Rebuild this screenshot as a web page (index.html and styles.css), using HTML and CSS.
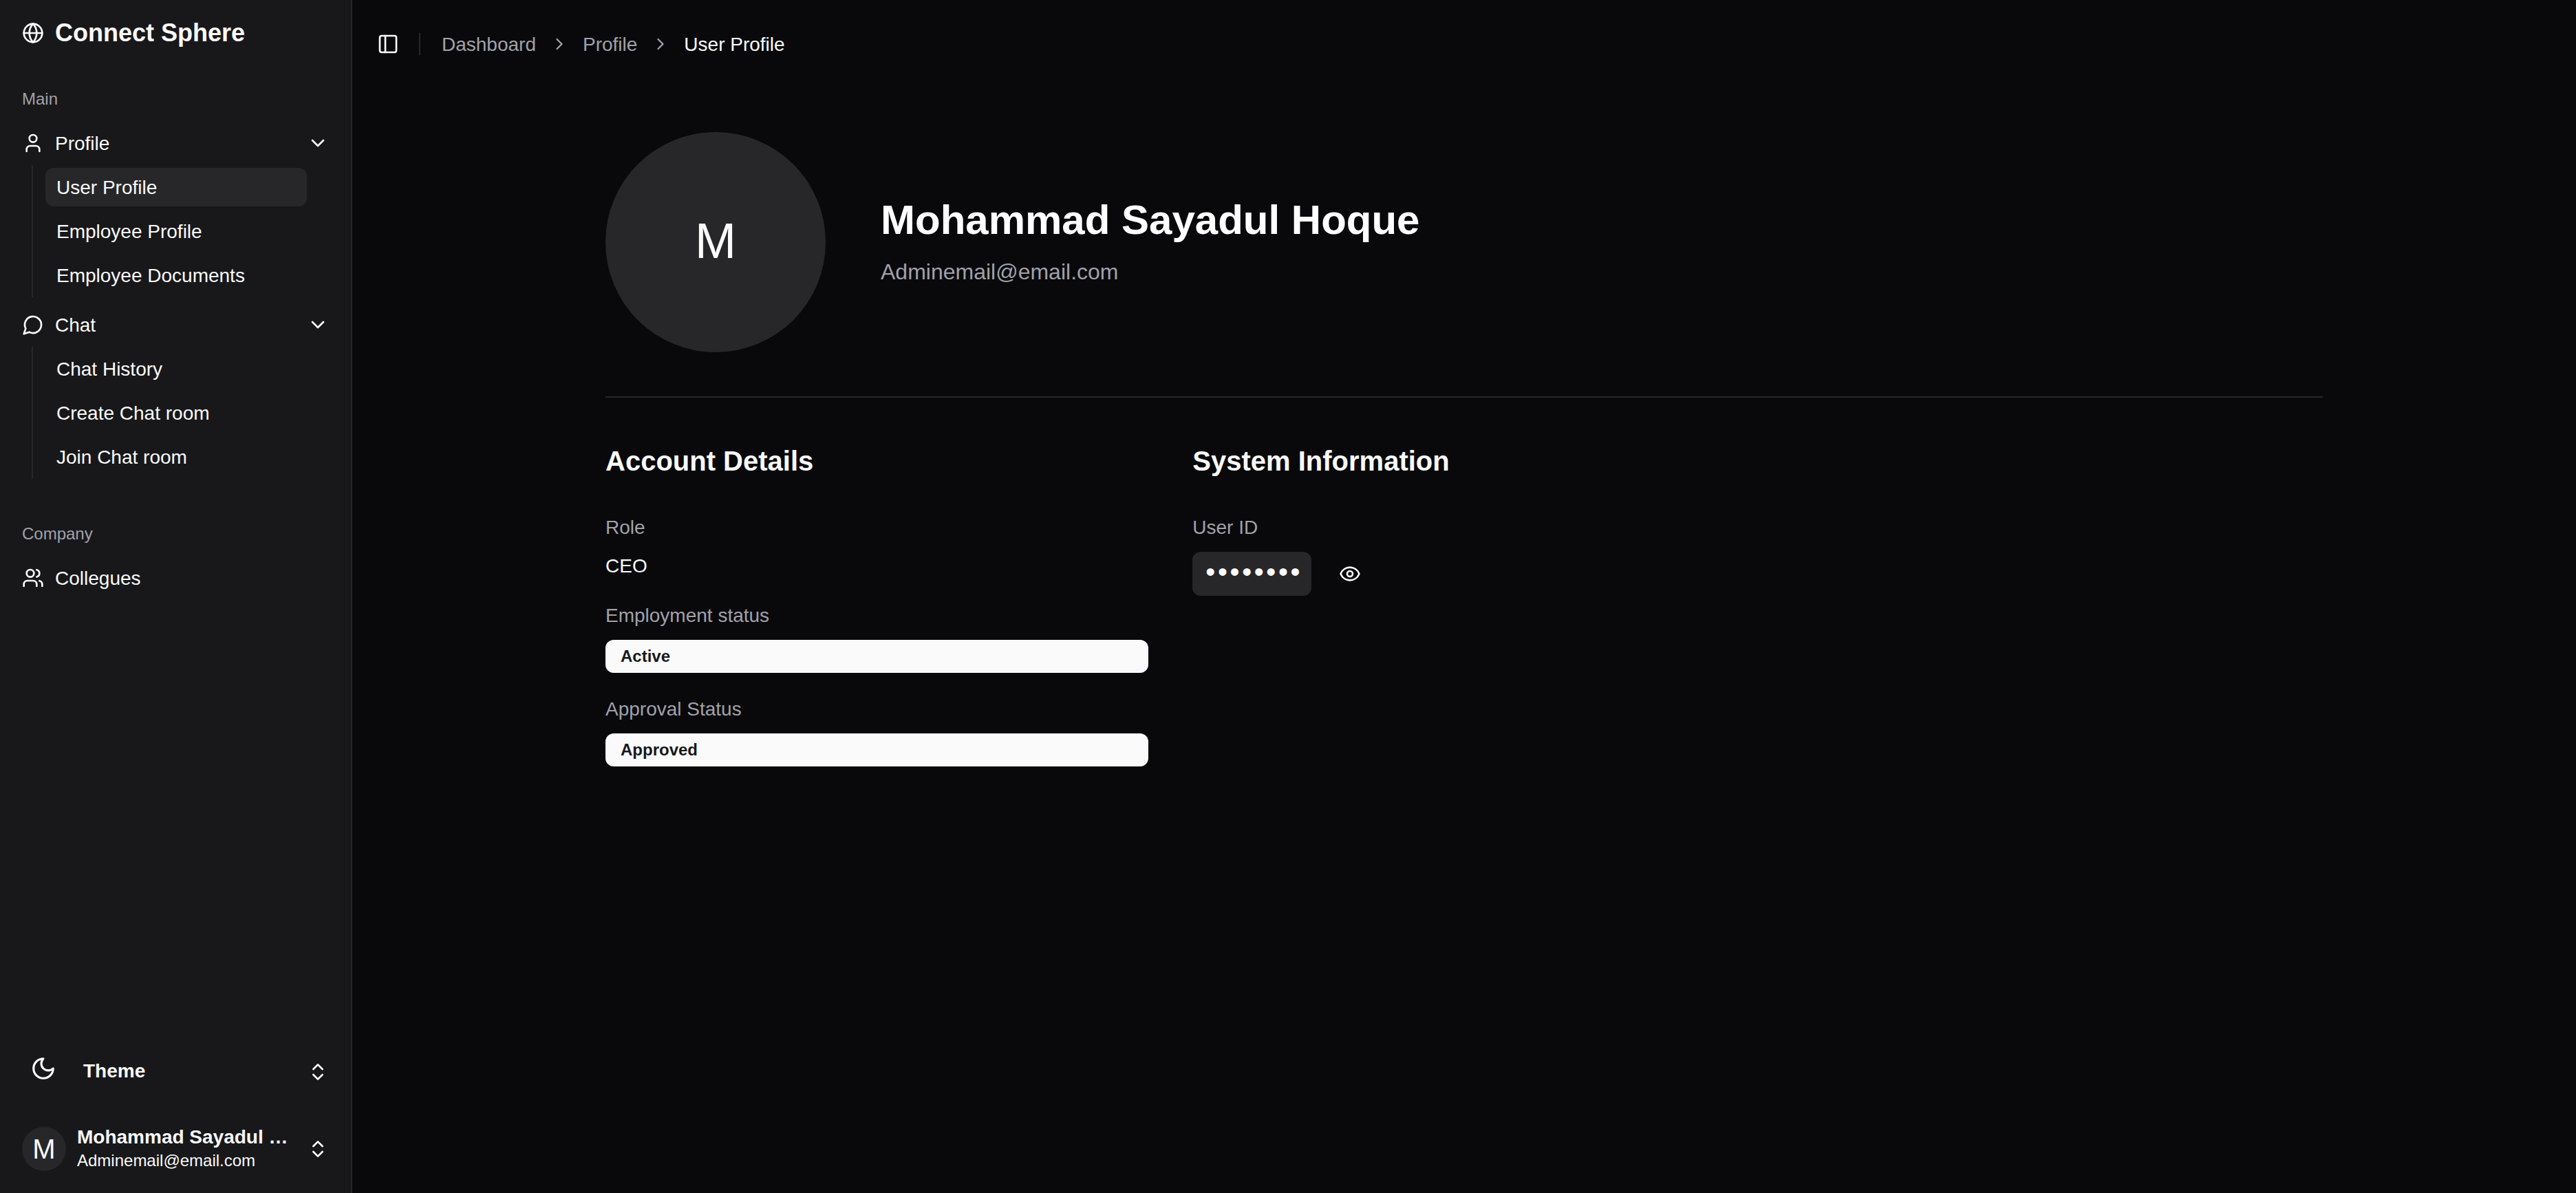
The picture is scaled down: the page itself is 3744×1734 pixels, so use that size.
FILE: index.html
```html
<!DOCTYPE html>
<html lang="en">
<head>
  <meta charset="UTF-8">
  <title>Connect Sphere</title>
  <link rel="stylesheet" href="styles.css">
</head>
<body>
  <aside class="sidebar">
    <div class="brand">
      <svg class="icon" viewBox="0 0 24 24"><circle cx="12" cy="12" r="10"/><path d="M12 2a14.5 14.5 0 0 0 0 20 14.5 14.5 0 0 0 0-20"/><path d="M2 12h20"/></svg>
      <span>Connect Sphere</span>
    </div>

    <div class="group">
      <div class="group-label">Main</div>
      <div class="nav-row">
        <svg class="icon" viewBox="0 0 24 24"><path d="M19 21v-2a4 4 0 0 0-4-4H9a4 4 0 0 0-4 4v2"/><circle cx="12" cy="7" r="4"/></svg>
        <span>Profile</span>
        <svg class="icon row-end" viewBox="0 0 24 24"><path d="m6 9 6 6 6-6"/></svg>
      </div>
      <ul class="sub-nav">
        <li class="active">User Profile</li>
        <li>Employee Profile</li>
        <li>Employee Documents</li>
      </ul>
      <div class="nav-row spaced">
        <svg class="icon" viewBox="0 0 24 24"><path d="M7.9 20A9 9 0 1 0 4 16.1L2 22Z"/></svg>
        <span>Chat</span>
        <svg class="icon row-end" viewBox="0 0 24 24"><path d="m6 9 6 6 6-6"/></svg>
      </div>
      <ul class="sub-nav">
        <li>Chat History</li>
        <li>Create Chat room</li>
        <li>Join Chat room</li>
      </ul>
    </div>

    <div class="group company">
      <div class="group-label">Company</div>
      <div class="nav-row">
        <svg class="icon" viewBox="0 0 24 24"><path d="M16 21v-2a4 4 0 0 0-4-4H6a4 4 0 0 0-4 4v2"/><circle cx="9" cy="7" r="4"/><path d="M22 21v-2a4 4 0 0 0-3-3.87"/><path d="M16 3.13a4 4 0 0 1 0 7.75"/></svg>
        <span>Collegues</span>
      </div>
    </div>

    <div class="sidebar-foot">
      <div class="theme-row">
        <svg class="icon moon" viewBox="0 0 24 24"><path d="M12 3a6 6 0 0 0 9 9 9 9 0 1 1-9-9Z"/></svg>
        <span class="theme-label">Theme</span>
        <svg class="icon row-end theme-updown" viewBox="0 0 24 24"><path d="m7 15 5 5 5-5"/><path d="m7 9 5-5 5 5"/></svg>
      </div>
      <div class="user-row">
        <div class="user-avatar">M</div>
        <div class="user-text">
          <div class="user-name">Mohammad Sayadul Hoque</div>
          <div class="user-mail">Adminemail@email.com</div>
        </div>
        <svg class="icon row-end" viewBox="0 0 24 24"><path d="m7 15 5 5 5-5"/><path d="m7 9 5-5 5 5"/></svg>
      </div>
    </div>
  </aside>

  <main class="main">
    <header class="topbar">
      <svg class="icon" viewBox="0 0 24 24"><rect x="3" y="3" width="18" height="18" rx="2"/><path d="M9 3v18"/></svg>
      <div class="topbar-sep"></div>
      <nav class="crumbs">
        <span>Dashboard</span>
        <svg class="crumb-icon" viewBox="0 0 24 24"><path d="m9 18 6-6-6-6"/></svg>
        <span>Profile</span>
        <svg class="crumb-icon" viewBox="0 0 24 24"><path d="m9 18 6-6-6-6"/></svg>
        <span class="crumb-current">User Profile</span>
      </nav>
    </header>

    <div class="content">
      <section class="profile-head">
        <div class="profile-avatar">M</div>
        <div class="profile-text">
          <h1 class="profile-name">Mohammad Sayadul Hoque</h1>
          <p class="profile-mail">Adminemail@email.com</p>
        </div>
      </section>

      <div class="details">
        <section>
          <h2>Account Details</h2>
          <div class="field-label">Role</div>
          <div class="field-value">CEO</div>
          <div class="field-label">Employment status</div>
          <div class="badge">Active</div>
          <div class="field-label">Approval Status</div>
          <div class="badge">Approved</div>
        </section>
        <section>
          <h2>System Information</h2>
          <div class="field-label">User ID</div>
          <div class="secret-row">
            <code class="secret">••••••••</code>
            <svg class="icon" viewBox="0 0 24 24"><path d="M2.062 12.348a1 1 0 0 1 0-.696 10.75 10.75 0 0 1 19.876 0 1 1 0 0 1 0 .696 10.75 10.75 0 0 1-19.876 0"/><circle cx="12" cy="12" r="3"/></svg>
          </div>
        </section>
      </div>
    </div>
  </main>
</body>
</html>
```

FILE: styles.css
```css
* {
  box-sizing: border-box;
}
body {
  margin: 0;
  height: 100vh;
  display: flex;
  overflow: hidden;
  background-color: #09090b;
  color: #fafafa;
  font-family: "Liberation Sans", Arial, sans-serif;
}
.icon {
  width: 32px;
  height: 32px;
  flex: none;
  fill: none;
  stroke: currentColor;
  stroke-width: 2;
  stroke-linecap: round;
  stroke-linejoin: round;
}

/* sidebar */
.sidebar {
  width: 512px;
  flex: none;
  display: flex;
  flex-direction: column;
  background-color: #18181b;
  border-right: 2px solid #27272a;
}
.brand {
  height: 96px;
  padding: 0 32px;
  display: flex;
  align-items: center;
  gap: 16px;
  font-size: 36px;
  font-weight: 700;
}
.group {
  margin-top: 16px;
  padding: 0 16px;
}
.group.company {
  margin-top: 48px;
}
.group-label {
  height: 64px;
  padding-left: 16px;
  display: flex;
  align-items: center;
  font-size: 24px;
  color: #a1a1aa;
}
.nav-row {
  height: 64px;
  padding: 0 16px;
  display: flex;
  align-items: center;
  gap: 16px;
  font-size: 28px;
}
.nav-row span {
  padding-top: 2px;
}
.nav-row.spaced {
  margin-top: 8px;
}
.row-end {
  margin-left: auto;
}
.sub-nav {
  list-style: none;
  margin: 0 0 0 30px;
  padding: 4px 48px 4px 18px;
  display: flex;
  flex-direction: column;
  gap: 8px;
  border-left: 2px solid #27272a;
  font-size: 28px;
}
.sub-nav li {
  height: 56px;
  padding: 2px 16px 0;
  display: flex;
  align-items: center;
  border-radius: 12px;
}
.sub-nav li.active {
  background-color: #27272a;
}
.sidebar-foot {
  margin-top: auto;
  padding: 0 16px 16px;
}
.theme-row {
  height: 64px;
  margin-bottom: 34px;
  padding: 0 16px;
  display: flex;
  align-items: center;
}
.moon {
  width: 38px;
  height: 38px;
  margin: 0 39px 6px 12px;
}
.theme-label {
  padding-top: 2px;
  font-size: 28px;
  font-weight: 700;
}
.theme-updown {
  margin-top: 4px;
}
.user-row {
  height: 96px;
  padding: 0 16px;
  display: flex;
  align-items: center;
  gap: 16px;
}
.user-avatar {
  width: 64px;
  height: 64px;
  flex: none;
  display: flex;
  align-items: center;
  justify-content: center;
  border-radius: 50%;
  background-color: #27272a;
  font-size: 40px;
}
.user-text {
  min-width: 0;
  flex: 1;
  padding-bottom: 2px;
}
.user-name {
  margin-top: -1px;
  font-size: 28px;
  font-weight: 700;
  line-height: 36px;
  white-space: nowrap;
  overflow: hidden;
  text-overflow: ellipsis;
}
.user-mail {
  font-size: 24px;
  line-height: 32px;
}

/* main */
.main {
  flex: 1;
  min-width: 0;
}
.topbar {
  height: 128px;
  padding-left: 36px;
  display: flex;
  align-items: center;
}
.topbar-sep {
  width: 2px;
  height: 32px;
  margin: 0 31px 0 29px;
  background-color: #27272a;
}
.crumbs {
  display: flex;
  align-items: center;
  gap: 20px;
  font-size: 28px;
  color: #a1a1aa;
}
.crumbs span {
  padding-top: 2px;
}
.crumb-icon {
  width: 28px;
  height: 28px;
  fill: none;
  stroke: currentColor;
  stroke-width: 2;
  stroke-linecap: round;
  stroke-linejoin: round;
}
.crumb-current {
  color: #fafafa;
}
.content {
  width: 2496px;
  margin: 64px auto 0;
}
.profile-head {
  display: flex;
  align-items: center;
  gap: 80px;
  padding-bottom: 64px;
  border-bottom: 2px solid #27272a;
}
.profile-avatar {
  width: 320px;
  height: 320px;
  flex: none;
  display: flex;
  align-items: center;
  justify-content: center;
  padding-bottom: 4px;
  border-radius: 50%;
  background-color: #27272a;
  font-size: 72px;
}
.profile-text {
  padding-bottom: 2px;
}
.profile-name {
  margin: 0;
  font-size: 60px;
  line-height: 72px;
  font-weight: 700;
  color: #fff;
}
.profile-mail {
  margin: 15px 0 0;
  font-size: 32px;
  line-height: 48px;
  color: #a1a1aa;
}
.details {
  margin-top: 64px;
  display: grid;
  grid-template-columns: repeat(3, 1fr);
  gap: 64px;
}
.details h2 {
  margin: 0 0 48px;
  font-size: 40px;
  line-height: 56px;
  font-weight: 700;
}
.field-label {
  margin-bottom: 15px;
  padding-top: 1px;
  font-size: 28px;
  line-height: 40px;
  color: #a1a1aa;
}
.field-value {
  margin-bottom: 31px;
  padding-top: 1px;
  font-size: 28px;
  line-height: 40px;
}
.badge {
  height: 48px;
  margin-bottom: 32px;
  padding: 0 22px;
  display: flex;
  align-items: center;
  border-radius: 12px;
  background-color: #fafafa;
  color: #18181b;
  font-size: 24px;
  font-weight: 700;
}
.secret-row {
  display: flex;
  align-items: center;
  gap: 40px;
}
.secret {
  width: 173px;
  height: 64px;
  padding: 0 0 0 14px;
  display: flex;
  align-items: center;
  border-radius: 12px;
  background-color: #27272a;
  font-family: "Liberation Mono", monospace;
  font-size: 40px;
  letter-spacing: -6.4px;
}
```
